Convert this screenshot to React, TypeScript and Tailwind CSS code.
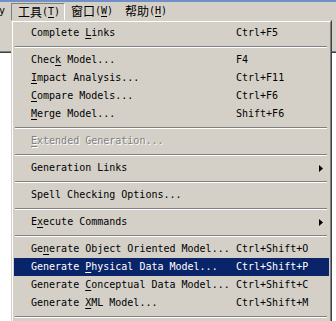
import React from "react";

type Item =
  | { sep: true }
  | {
      sep?: false;
      label: string;
      u: number;
      sc?: string;
      sub?: boolean;
      disabled?: boolean;
      active?: boolean;
    };

const items: Item[] = [
  { label: "Complete Links", u: 9, sc: "Ctrl+F5" },
  { sep: true },
  { label: "Check Model...", u: 4, sc: "F4" },
  { label: "Impact Analysis...", u: 0, sc: "Ctrl+F11" },
  { label: "Compare Models...", u: 0, sc: "Ctrl+F6" },
  { label: "Merge Model...", u: 0, sc: "Shift+F6" },
  { sep: true },
  { label: "Extended Generation...", u: 0, disabled: true },
  { sep: true },
  { label: "Generation Links", u: -1, sub: true },
  { sep: true },
  { label: "Spell Checking Options...", u: -1 },
  { sep: true },
  { label: "Execute Commands", u: 1, sub: true },
  { sep: true },
  { label: "Generate Object Oriented Model...", u: 2, sc: "Ctrl+Shift+O" },
  { label: "Generate Physical Data Model...", u: 9, sc: "Ctrl+Shift+P", active: true },
  { label: "Generate Conceptual Data Model...", u: 9, sc: "Ctrl+Shift+C" },
  { label: "Generate XML Model...", u: 9, sc: "Ctrl+Shift+M" },
  { sep: true },
];

const mono = { fontFamily: '"DejaVu Sans Mono", "Liberation Mono", monospace' };

function Label({ text, u }: { text: string; u: number }) {
  if (u < 0) return <>{text}</>;
  return (
    <>
      {text.slice(0, u)}
      <span className="underline decoration-1 underline-offset-[2px]">{text[u]}</span>
      {text.slice(u + 1)}
    </>
  );
}

function MenuBarItem({ zh, key1, pressed }: { zh: string; key1: string; pressed?: boolean }) {
  return (
    <div
      className={
        "flex items-center h-[17px] w-[54px] pl-[6px] " +
        (pressed
          ? "border-l border-t border-r border-l-[#808080] border-t-[#808080] border-r-white pl-[5px] mt-[1px] self-start"
          : "")
      }
    >
      <span className="text-[12px] leading-none text-black" style={{ fontFamily: '"Noto Sans CJK SC", sans-serif' }}>
        {zh}
      </span>
      <span className="text-[10px] leading-none text-black" style={mono}>
        (<span className="underline decoration-1 underline-offset-[2px]">{key1}</span>)
      </span>
    </div>
  );
}

export default function App() {
  return (
    <div className="relative w-[336px] h-[321px] overflow-hidden bg-white">
      {/* title bar sliver */}
      <div className="h-[2px] bg-[#6f8fc9]" />
      {/* menu bar */}
      <div className="flex h-[18px] bg-[#d4d0c8]">
        <div className="w-[11px] flex items-center justify-end pr-[6px] overflow-hidden">
          <span className="text-[10px] leading-none text-black" style={mono}>
            y
          </span>
        </div>
        <MenuBarItem zh="工具" key1="T" pressed />
        <MenuBarItem zh="窗口" key1="W" />
        <MenuBarItem zh="帮助" key1="H" />
        <div className="flex-1" />
      </div>
      {/* toolbar area behind */}
      <div className="h-[31px] bg-[#d4d0c8]" />
      <div className="h-[1px] bg-[#808080]" />
      <div className="h-[1px] bg-[#404040]" />
      <div className="flex-1 bg-white" />

      {/* dropdown menu */}
      <div
        className="absolute left-[11px] top-[20px] w-[321px] bg-[#d4d0c8] border-l border-t border-r border-l-[#d4d0c8] border-t-[#d4d0c8] border-r-[#404040]"
        style={mono}
      >
        <div className="border-l border-t border-r border-l-white border-t-white border-r-[#808080] pt-[2px] px-[1px] pb-[20px]">
          {items.map((it, i) =>
            it.sep ? (
              <div key={i} className="pt-[4px] pb-[3px] pl-[1px] pr-[2px]">
                <div className="h-[1px] bg-[#808080]" />
                <div className="h-[1px] bg-white" />
              </div>
            ) : (
              <div
                key={i}
                className={
                  "flex items-center h-[18px] pl-[17px] pr-[6px] text-[10px] leading-none whitespace-pre " +
                  (it.active ? "bg-[#0a246a] text-white" : it.disabled ? "text-[#808080]" : "text-black")
                }
                style={it.disabled ? { textShadow: "1px 1px 0 #ffffff" } : undefined}
              >
                <div className="w-[205px] shrink-0">
                  <Label text={it.label} u={it.u} />
                </div>
                <div className="flex-1">{it.sc ?? ""}</div>
                {it.sub && (
                  <svg width="4" height="7" viewBox="0 0 4 7" className="shrink-0">
                    <path d="M0 0 L4 3.5 L0 7 Z" fill="#000" />
                  </svg>
                )}
              </div>
            )
          )}
        </div>
      </div>
    </div>
  );
}
